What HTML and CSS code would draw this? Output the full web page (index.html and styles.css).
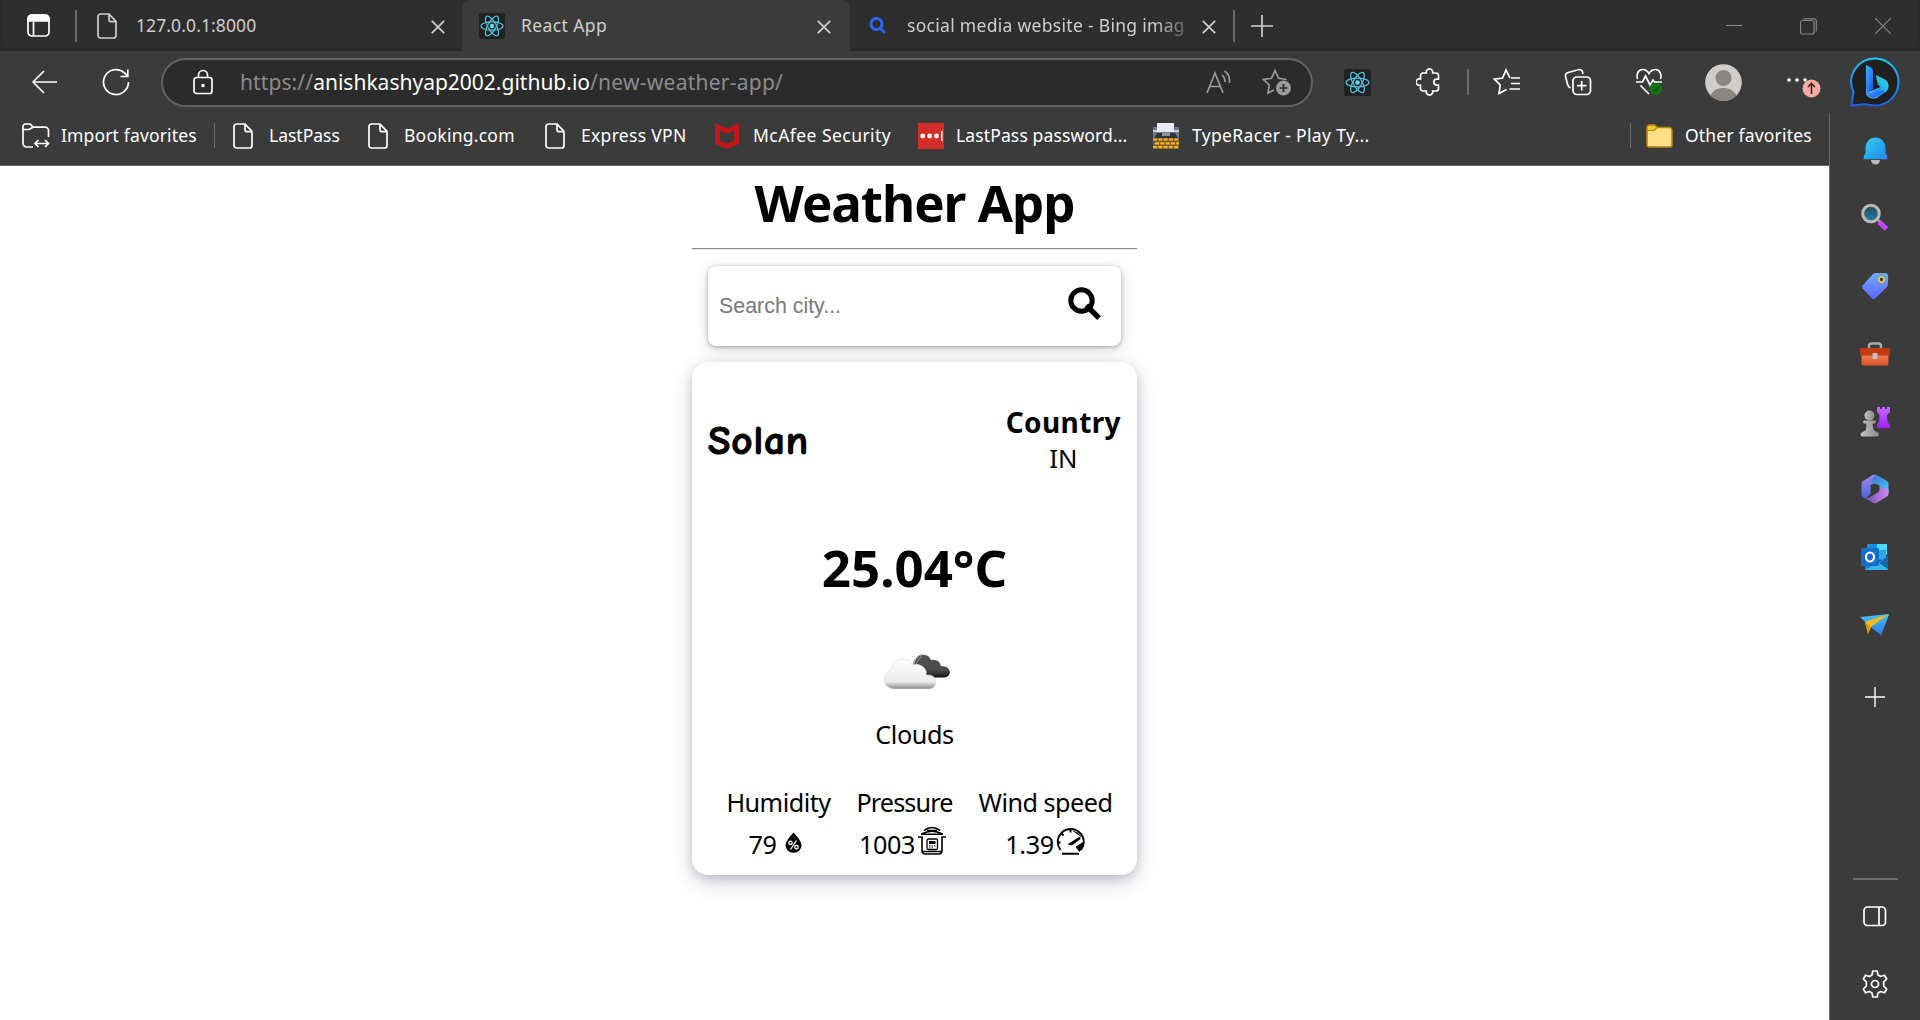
FILE: index.html
```html
<!DOCTYPE html>
<html lang="en">
<head>
<meta charset="utf-8">
<title>React App</title>
<link rel="stylesheet" href="styles.css">
</head>
<body>
<svg class="defs" width="0" height="0">
  <defs>
    <linearGradient id="gBing" x1="0" y1="0" x2="0" y2="1"><stop offset="0" stop-color="#18c8f4"/><stop offset="1" stop-color="#1f5ff0"/></linearGradient>
    <linearGradient id="gB" x1="0" y1="0" x2="1" y2="1"><stop offset="0" stop-color="#39b6ff"/><stop offset="1" stop-color="#1c4fe8"/></linearGradient>
    <linearGradient id="gB2" x1="1" y1="0" x2="0" y2="1"><stop offset="0" stop-color="#35e0d0"/><stop offset=".5" stop-color="#22a8f0"/><stop offset="1" stop-color="#a8e4ff"/></linearGradient>
    <linearGradient id="gBell" x1="0" y1="0" x2="1" y2="1"><stop offset="0" stop-color="#3ccbf4"/><stop offset=".7" stop-color="#1e9fee"/><stop offset="1" stop-color="#3f7dfb"/></linearGradient>
    <linearGradient id="gLens" x1="0" y1="0" x2="0" y2="1"><stop offset="0" stop-color="#234a5c"/><stop offset="1" stop-color="#2281a8"/></linearGradient>
    <linearGradient id="gTag" x1="0" y1="0" x2="0" y2="1"><stop offset="0" stop-color="#6cabf8"/><stop offset="1" stop-color="#6264ff"/></linearGradient>
    <linearGradient id="gBox" x1="0" y1="0" x2="0" y2="1"><stop offset="0" stop-color="#f5805a"/><stop offset="1" stop-color="#de4f28"/></linearGradient>
    <linearGradient id="gPawn" x1="0" y1="0" x2="1" y2="0"><stop offset="0" stop-color="#c4c4c4"/><stop offset="1" stop-color="#8a8a8a"/></linearGradient>
    <linearGradient id="gRook" x1="0" y1="0" x2="0" y2="1"><stop offset="0" stop-color="#c868ff"/><stop offset="1" stop-color="#a020ff"/></linearGradient>
    <linearGradient id="gM1" x1="0" y1="0" x2="1" y2="1"><stop offset="0" stop-color="#3a6fd0"/><stop offset="1" stop-color="#4cc8f8"/></linearGradient>
    <linearGradient id="gM2" x1="0" y1="0" x2="0" y2="1"><stop offset="0" stop-color="#a884ea"/><stop offset="1" stop-color="#4668d8"/></linearGradient>
    <linearGradient id="gM3" x1="0" y1="0" x2="1" y2="0"><stop offset="0" stop-color="#6a4cb0"/><stop offset="1" stop-color="#d08aec"/></linearGradient>
    <linearGradient id="gPlane" x1="0" y1="0" x2="0" y2="1"><stop offset="0" stop-color="#4cc2f4"/><stop offset="1" stop-color="#2b78ee"/></linearGradient>
    <linearGradient id="gCloud" x1="0" y1="0" x2="0" y2="1"><stop offset="0" stop-color="#ffffff"/><stop offset=".75" stop-color="#ececec"/><stop offset="1" stop-color="#8a8a8a"/></linearGradient>
    <linearGradient id="gDark" x1="0" y1="0" x2="0" y2="1"><stop offset="0" stop-color="#555"/><stop offset=".7" stop-color="#484848"/><stop offset="1" stop-color="#111"/></linearGradient>
    <symbol id="page" viewBox="0 0 20 26"><path d="M3.500 1H12L19 8.300V22.500a2.500 2.500 0 0 1-2.500 2.500h-13A2.500 2.500 0 0 1 1 22.500v-19A2.500 2.500 0 0 1 3.500 1ZM12 1v6.200A1.400 1.400 0 0 0 13.400 8.600H19"/></symbol>
    <symbol id="cross" viewBox="0 0 14 14"><path d="M.8.8l12.400 12.400M13.200.8L.8 13.200"/></symbol>
    <symbol id="react" viewBox="0 0 26 26"><rect width="26" height="26" rx="2.500" fill="#212121"/><g fill="none" stroke="#53c1de" stroke-width="1.200"><ellipse cx="13" cy="13" rx="11" ry="4.200"/><ellipse cx="13" cy="13" rx="11" ry="4.200" transform="rotate(60 13 13)"/><ellipse cx="13" cy="13" rx="11" ry="4.200" transform="rotate(120 13 13)"/></g><circle cx="13" cy="13" r="2.200" fill="#61dafb"/></symbol>
  </defs>
</svg>
<div class="browser">
  <header class="tabs">
    <svg class="ic workspace" width="23" height="23" viewBox="0 0 23 23"><rect x="1" y="1" width="21" height="21" rx="4"/><path d="M1 7V5a4 4 0 0 1 4-4h13a4 4 0 0 1 4 4v2Z" fill="#fff"/><path d="M6.500 7v15"/></svg>
    <i class="bar tabbar"></i>
    <div class="tab first">
      <svg class="ic dim" width="20" height="26"><use href="#page"/></svg>
      <span class="label t1">127.0.0.1:8000</span>
      <svg class="ic dim x" width="14" height="14"><use href="#cross"/></svg>
    </div>
    <div class="tab active">
      <svg width="26" height="26"><use href="#react"/></svg>
      <span class="label t2">React App</span>
      <svg class="ic dim x" width="14" height="14"><use href="#cross"/></svg>
    </div>
    <div class="tab third">
      <svg class="find" width="18" height="18" viewBox="0 0 18 18"><circle cx="7.500" cy="7" r="5.500"/><path d="M11.500 11.500l4.500 4.500"/></svg>
      <span class="label t3">social media website - Bing imag</span>
      <svg class="ic dim x" width="14" height="14"><use href="#cross"/></svg>
    </div>
    <i class="bar tabbar"></i>
    <svg class="ic dim newtab" width="24" height="24" viewBox="0 0 24 24"><path d="M12 1v22M1 12h22"/></svg>
    <div class="wincontrols">
      <svg width="16" height="16" viewBox="0 0 16 16"><path d="M0 7.500h16"/></svg>
      <svg width="17" height="17" viewBox="0 0 17 17"><rect x=".5" y="2.500" width="13.500" height="13.500" rx="2"/><path d="M3.500.8H14a2.300 2.300 0 0 1 2.300 2.300v10.500"/></svg>
      <svg width="16" height="16" viewBox="0 0 16 16"><path d="M0 0l16 16M16 0L0 16"/></svg>
    </div>
  </header>

  <nav class="toolbar">
    <svg class="ic back" width="26" height="24" viewBox="0 0 26 24"><path d="M13 1L2 12l11 11M2 12h24"/></svg>
    <svg class="ic reload" width="28" height="28" viewBox="0 0 28 28"><path d="M26.500 14A12.500 12.500 0 1 1 22.500 4.900L25.500 8M25.800 1.500V8.500H18.500"/></svg>
    <div class="address">
      <svg class="ic" width="20" height="26" viewBox="0 0 20 26"><rect x="1" y="8.500" width="18" height="16" rx="2.500"/><path d="M5.500 8.500V6a4.500 4.500 0 0 1 9 0v2.500"/><circle cx="10" cy="16.500" r="1" fill="#fff"/></svg>
      <div class="url"><span class="u1">https://</span><span class="u2">anishkashyap2002.github.io</span><span class="u3">/new-weather-app/</span></div>
      <svg class="ic grey read" width="26" height="24" viewBox="0 0 26 24"><path d="M1 23L9 3l8 20M4 16.500h10M16 5c2 1.500 3 4 3 7M18.500 1c4 2.500 5.500 7 5 12"/></svg>
      <svg class="ic grey" width="30" height="28" viewBox="0 0 30 28"><path d="M12 22L6 25l1.200-8L1.500 11.500l8-1.200L13 2.500l3.600 7.800 8 1.200"/><circle cx="21.500" cy="20" r="7.500" fill="#9a9a9a" stroke="none"/><path d="M21.500 16v8M17.500 20h8" stroke="#2b2b2b"/></svg>
    </div>
    <svg class="t-react" width="27" height="27" viewBox="0 0 26 26"><use href="#react"/></svg>
    <svg class="ic t-puzzle" width="25" height="28" viewBox="0 0 25 28"><path d="M6 5h4.300a3.300 3.300 0 1 1 6.400 0H20a2.500 2.500 0 0 1 2.500 2.500v3.600h-1.700a3 3 0 0 0 0 6h1.700v3.400A2.500 2.500 0 0 1 20 23h-3.300a3.300 3.300 0 1 1-6.400 0H7a2.500 2.500 0 0 1-2.500-2.500v-3.300a3.300 3.300 0 1 1 0-6.200V7.500A2.500 2.500 0 0 1 7 5Z"/></svg>
    <i class="bar t-bar"></i>
    <svg class="ic t-fav" width="28" height="28" viewBox="0 0 28 28"><path d="M17 10L13 2 9.600 10 1.500 11.200 7.200 17 6 25.500 13.500 21.500M18 10h9M18 15.500h9M16.500 21h10.500"/></svg>
    <svg class="ic t-coll" width="28" height="28" viewBox="0 0 28 28"><rect x="9" y="9" width="17.500" height="17.500" rx="4"/><path d="M17.700 13v9.500M13 17.700h9.500M6.500 20C4.500 19 3.800 17.500 3.300 15.500L1.600 8.500C1.200 6.500 2.200 5 4.200 4.500L14.500 1.700c2-.5 3.500.3 4 2.300L19 6"/></svg>
    <svg class="ic t-heart" width="30" height="30" viewBox="0 0 30 30"><path d="M2.500 12C1 8 3 2.500 7.500 2.500c3 0 5 1.500 6.500 4 1.500-2.500 3.500-4 6.500-4C25 2.500 27 8 25.500 12M1 15h6.500l3-6 4.500 9 3-5 1.500 2H27M5.500 18.500L14 27"/><circle cx="21" cy="22" r="6" fill="#0f7a12" stroke="none"/><path d="M18.500 22l2 2 3.500-4" stroke-width="1.200" stroke="#1d3d1d"/></svg>
    <svg class="t-user" width="37" height="37" viewBox="0 0 37 37"><circle cx="18.500" cy="18.500" r="18.300" fill="#d0cecb"/><circle cx="18.500" cy="14" r="8" fill="#8a8682"/><path d="M5.500 31.500c2.500-5 7-7.500 13-7.500s10.500 2.500 13 7.500A18 18 0 0 1 18.500 37 18 18 0 0 1 5.500 31.500Z" fill="#8a8682"/></svg>
    <svg class="t-more" width="36" height="30" viewBox="0 0 36 30"><g fill="#fff"><circle cx="3" cy="10" r="1.800"/><circle cx="11" cy="10" r="1.800"/><circle cx="19" cy="10" r="1.800"/></g><circle cx="25.500" cy="18.500" r="9" fill="#f6aaa5"/><path d="M25.500 24V14M22 17l3.500-3.500L29 17" fill="none" stroke="#3b2525" stroke-width="1.600"/></svg>
    <svg class="t-bing" width="50" height="50" viewBox="0 0 50 50"><path d="M25 1.500a23.500 23.500 0 1 1 0 47c-5 0-8-1.500-11-1.200L2 48.500c-.8 0-.6-1-.3-2L3.500 35A23.500 23.500 0 0 1 25 1.500Z" fill="#202020" stroke="url(#gBing)" stroke-width="2"/><path d="M16 8l5 2.500q2 1 2 3V32l-7 5q1-2 0-4Z" fill="url(#gB)"/><path d="M26 18l9 4.500q4 2.500 3.500 7.500Q38 34 34 36L26.500 41q-6 2-10-3-.5-3 2-3l12-5-2.500-2.500Q26 22 26 18Z" fill="url(#gB2)"/><path d="M16 31v4q1 5.500 6.500 6 2.500 0 5-1.500L35 35l-6-4-8 4.500q-3.500 1-5-4.500Z" fill="url(#gB)"/></svg>
  </nav>

  <div class="lower">
    <div class="content">
      <div class="favorites">
        <svg class="ic f-import" width="28" height="27" viewBox="0 0 28 27"><path d="M11 25H4.500A3.500 3.500 0 0 1 1 21.500V4.500A2.500 2.500 0 0 1 3.500 2H8l3.500 3.200H23a3.500 3.500 0 0 1 3.500 3.500V15M1 7.500h6L11.500 5M16.500 18L13 21.500l3.500 3.500M23 18l3.500 3.500L23 25M13 21.500h13.500"/></svg>
        <span class="fl a">Import favorites</span>
        <i class="bar f-bar"></i>
        <svg class="ic f-page" width="20" height="26"><use href="#page"/></svg><span class="fl b">LastPass</span>
        <svg class="ic f-page" width="20" height="26"><use href="#page"/></svg><span class="fl c">Booking.com</span>
        <svg class="ic f-page" width="20" height="26"><use href="#page"/></svg><span class="fl d">Express VPN</span>
        <svg class="f-mc" width="24" height="26" viewBox="0 0 24 26"><path d="M0 0l12 5.500L24 0v21L12 26 0 21ZM5 7.500v10.200l7 3 7-3V7.500l-7 3.300Z" fill="#c01818" fill-rule="evenodd"/></svg><span class="fl e">McAfee Security</span>
        <svg class="f-lp" width="26" height="26" viewBox="0 0 26 26"><path fill="#d32d27" d="M0 0h26v26H0z"/><g fill="#fff"><circle cx="4.700" cy="13" r="2.400"/><circle cx="11.700" cy="13" r="2.400"/><circle cx="18.500" cy="13" r="2.400"/><path d="M23 8h1.500v10H23z"/></g></svg><span class="fl f">LastPass password...</span>
        <svg class="f-tr" width="26" height="26" viewBox="0 0 26 26"><path fill="#73788e" d="M0 4h26v11H0z"/><path fill="#c6c8d6" d="M0 7h26v2H0z"/><path fill="#e9ebf3" d="M4 0h17v9H4z"/><path fill="#30343e" d="M4 10h18l3 5H1z"/><path fill="#8e929c" d="M9 10h8v3H9z"/><path fill="#7d5c28" d="M0 15h26v11H0z"/><path stroke="#f3b32b" stroke-width="2.200" stroke-dasharray="4 1.300" d="M0 16.500h26M2 20.300h24M0 24.200h26"/></svg><span class="fl g">TypeRacer - Play Ty...</span>
        <i class="bar f-bar2"></i>
        <svg class="f-folder" width="27" height="24" viewBox="0 0 27 24"><path d="M1 20.500V4a3 3 0 0 1 3-3h4.500l3 2.500H23a3 3 0 0 1 3 3v14.500a2 2 0 0 1-2 2H3a2 2 0 0 1-2-2.500Z" fill="#ffde85" stroke="#b8870c" stroke-width="1.600"/><path d="M1.200 6.500V4A2.500 2.500 0 0 1 4 1.200h4.500l2.700 2.300L8 6.500Z" fill="#f5c52b" stroke="#b8870c" stroke-width="1.200"/></svg><span class="fl h">Other favorites</span>
      </div>

      <main class="page">
        <h1 class="title">Weather App</h1>
        <hr class="rule">
        <div class="search"><span class="placeholder">Search city...</span>
          <svg width="33" height="33" viewBox="0 0 33 33"><circle cx="13.500" cy="13.500" r="10.700" fill="none" stroke="#000" stroke-width="5"/><path d="M21 21l9 9" stroke="#000" stroke-width="5.400" stroke-linecap="square" transform="translate(-.8 -.8)"/></svg>
        </div>
        <section class="card">
          <div class="place"><h2 class="city">Solan</h2>
            <div class="country"><strong class="ctitle">Country</strong><span class="code">IN</span></div></div>
          <div class="temp">25.04°C</div>
          <svg class="cloud" width="68" height="38" viewBox="0 0 68 38"><path d="M31 12C32 5 37 1 42 2q4 .5 6 5 8-1.500 10 6 8 0 9 6-.5 5-6 5.500H42Z" fill="url(#gDark)"/><path d="M30 12c1-6 5-9.500 9-10.500M33 12c1-4 3-7 6-8.500" fill="none" stroke="#999" stroke-width="1"/><path d="M10 36Q1 34 1 26.500 1 20 8 17 9 7 19 6q7 0 10 6 9-2 13 4 2 3 1 6 9-1 10 7-.5 6-6 7Z" fill="url(#gCloud)" stroke="#dedede" stroke-width=".7"/></svg>
          <div class="cond">Clouds</div>
          <div class="stats">
            <div class="stat s1"><span class="name">Humidity</span><span class="value"><span class="n1">79</span>
              <svg class="drop" width="17" height="21" viewBox="0 0 17 21"><path d="M8.500.5Q16.500 9 16.500 13.500a8 7.300 0 0 1-16 0Q.5 9 8.500.5Z"/><g fill="none" stroke="#fff" stroke-width="1.300"><circle cx="5.500" cy="10.800" r="1.700"/><circle cx="11.500" cy="15.200" r="1.700"/><path d="M11.500 8.500l-6 9"/></g></svg></span></div>
            <div class="stat s2"><span class="name">Pressure</span><span class="value"><span class="n2">1003</span>
              <svg class="cooker" width="30" height="29" viewBox="0 0 30 29"><g fill="none" stroke="#000" stroke-width="1.600"><path d="M7 4.500Q15-1.500 23 4.500M10 4.500h10M4.500 8Q15 2.500 25.500 8M4 8.300h22M1 11h4v13.500q0 3.500 3.500 3.500h13q3.500 0 3.500-3.500V11h4M5 25.500h20"/><rect x="10" y="13" width="10.500" height="10.500" rx="1.500" stroke-width="1.300"/></g><path d="M12 15h6.500v3H12zM12 19.500h1.500v1H12zM14.500 19.500H16v1h-1.500zM17 19.500h1.500v1H17zM12 21.500h1.500v.8H12zM14.500 21.500H16v.8h-1.500z"/></svg></span></div>
            <div class="stat s3"><span class="name">Wind speed</span><span class="value"><span class="n3">1.39</span>
              <svg class="gauge" width="29" height="27" viewBox="0 0 29 27"><path d="M4.500 22A13 13 0 1 1 25 22M1.500 14.500h3M14.500 1.500v3M5.500 5.500l2 2M6 25.700h17" fill="none" stroke="#000" stroke-width="1.900"/><path d="M12 16L23 9q2 0 1.500 2L16.500 17q-4 1-4.500-1Z"/><path d="M27.500 14l-7.500 5 3.500 4.500q4-4 4-9.500ZM17 3q6 1.500 8 6" stroke="#000" fill="#000" stroke-width=".7"/></svg></span></div>
          </div>
        </section>
      </main>
    </div>

    <aside class="side">
      <div class="slot"><svg width="25" height="28" viewBox="0 0 25 28"><path d="M8 23a4.500 4.500 0 0 0 9 0Z" fill="#b8b8b8"/><path d="M12.500.5Q22 1 22.500 11v5q2 2 1.800 6.300H.7Q.5 18 2.500 16v-5Q3 1 12.500.5Z" fill="url(#gBell)"/></svg></div>
      <div class="slot lens"><svg width="28" height="28" viewBox="0 0 28 28"><path d="M18 19l7.500 6.800" stroke="#c543ff" stroke-width="5"/><path d="M15 15l4 4" stroke="#999" stroke-width="2.500"/><circle cx="10" cy="10.500" r="8.300" fill="url(#gLens)" stroke="#b9b9b9" stroke-width="3"/></svg></div>
      <div class="slot"><svg width="28" height="28" viewBox="0 0 28 28"><path d="M14 1h10q3 0 3.200 3l-.3 8.500q-.2 1.700-1.500 3L14 26.500q-1.500 1-3 0L1.500 16.500q-1-1.500 0-3L12 2q1-1 2-1Z" fill="url(#gTag)"/><circle cx="20.500" cy="7.500" r="2.500" fill="#243a70" stroke="#f8cd0c" stroke-width="1.700"/></svg></div>
      <div class="slot"><svg width="30" height="24" viewBox="0 0 30 24"><path d="M9 6V4q0-2.500 2.500-2.500h7Q21 1.500 21 4v2" fill="none" stroke="#aaa" stroke-width="2.400"/><path d="M1.500 12h27v9q0 2.500-2 2.500h-23q-2 0-2-2.500Z" fill="url(#gBox)"/><path d="M1.500 6h27q1.500 0 1.500 1.500V12q-1 1.500-3 1.500H3Q1 13.500 0 12V7.500Q0 6 1.500 6Z" fill="#c43a12"/><rect x="12.500" y="11" width="5" height="6" rx=".8" fill="#c0c0c0"/></svg></div>
      <div class="slot"><svg width="30" height="30" viewBox="0 0 30 30"><path d="M17 0h3v2h2V0h3v2h2V0h3v5l-3 3 .5 7 2.500 3v3H17v-3l2-3 .5-7L17 5Z" fill="url(#gRook)"/><circle cx="9.500" cy="8.500" r="5" fill="url(#gPawn)"/><path d="M4 13.500h11q2 1.500 0 3h-2.500L13.500 23l5 3q1 3-1 3.500H2q-2-.5-1-3.500l5-3 .5-6.500H4q-2-1.500 0-3Z" fill="url(#gPawn)"/></svg></div>
      <div class="slot"><svg width="28" height="30" viewBox="0 0 28 30"><path d="M9 2.500L12.500.8q1.500-.8 3 0L26 7q1.500 1 1.500 2.500V19L18.500 13.500V11.500L14 9.500 9 11Z" fill="url(#gM1)"/><path d="M12.500.8L14 2q-3 1.500-3 5l-1.500 4V20l-5 4.500L2 23Q.5 22 .5 20V9.500Q.5 8 2 7Z" fill="url(#gM2)"/><path d="M27.500 15v5q0 1.500-1.500 2.500L15.500 29q-1.500.7-3 0L3 23.500q4 1 7-1l7-4.200q1.500-1 1.500-3.300v-2Z" fill="url(#gM3)"/></svg></div>
      <div class="slot"><svg width="28" height="28" viewBox="0 0 28 28"><path fill="#1490df" d="M6 1h19v16H6z"/><path fill="#50d9ff" d="M16 1h10v11H16z"/><path fill="#28a8ea" d="M7 12h9v8H7zM16 7h9v9h-9z"/><path fill="#1784d8" d="M4 15l23 12H4z"/><path fill="#35b8f1" d="M27 13v14H4l14-8Z"/><path fill="#1268b0" d="M27 13v13l-9-6Z"/><rect y="5" width="18" height="18" rx="1.500" fill="#0f6fc9"/><ellipse cx="9" cy="14" rx="4" ry="4.500" fill="none" stroke="#fff" stroke-width="2.200"/></svg></div>
      <div class="slot"><svg width="30" height="22" viewBox="0 0 30 22"><path d="M0 3L29 0 21 21 12 14Z" fill="url(#gPlane)"/><path d="M29 0L5 8l3 12 3-7Z" fill="#f7bd18"/><path d="M5 8l3 12 2-8Z" fill="#e0900a"/><path d="M29 0L11 13l10 8Z" fill="url(#gPlane)"/></svg></div>
      <div class="slot plus"><svg class="ic" width="20" height="20" viewBox="0 0 20 20"><path d="M10 0v20M0 10h20" stroke-width="1.400"/></svg></div>
      <i class="sep"></i>
      <div class="slot"><svg class="ic" width="24" height="21" viewBox="0 0 24 21"><rect x="1" y="1" width="21.500" height="18.500" rx="3.500"/><path d="M16 1v18.500"/></svg></div>
      <div class="slot"><svg class="ic" width="28" height="28" viewBox="0 0 28 28"><path d="M11.800 1h4.400l.8 4 2.600 1.500L23.500 5.200l2.200 3.800-3 2.800v4.400l3 2.800-2.200 3.800-3.900-1.300L17 23l-.8 4h-4.400L11 23l-2.600-1.500-3.900 1.300L2.300 19l3-2.800v-4.400l-3-2.800 2.200-3.800 3.900 1.300L11 5Z" stroke-linejoin="round"/><circle cx="14" cy="14" r="3.500"/></svg></div>
    </aside>
  </div>
</div>
</body>
</html>
```

FILE: styles.css
```css
* { box-sizing: border-box; }
body { margin: 0; width: 1920px; height: 1020px; overflow: hidden; background: #fff; font-family: "Segoe UI", "Noto Sans", sans-serif; }
svg { display: block; flex: none; }
.defs { position: absolute; }
.browser { display: flex; flex-direction: column; height: 1020px; background: #3b3b3b; }
.ic { fill: none; stroke: #fff; stroke-width: 1.7; }
.dim { stroke: #d0d0d0; }
.grey { stroke: #9a9a9a; }
.bar { display: block; width: 1px; background: #6a6a6a; flex: none; }

.tabs { display: flex; align-items: center; height: 51px; background: #2e2e2e; box-shadow: inset 0 -2px 2px #272727; flex: none; }
.workspace { margin-left: 27px; }
.tabbar { height: 32px; width: 2px; margin-left: 25px; }
.tab { display: flex; align-items: center; height: 51px; }
.label { padding-bottom: 2px; font-size: 17.5px; line-height: 26px; color: #cfcfcf; white-space: nowrap; }
.x { margin: 2px 0 0 auto; }
.first { width: 385px; padding: 0 17px 0 20px; }
.first .label { margin-left: 19px; letter-spacing: .1px; }
.active { width: 388px; background: #3b3b3b; border-radius: 8px 8px 0 0; padding: 0 19px 0 17px; }
.active .label { margin-left: 16px; letter-spacing: .4px; }
.third { width: 383px; padding: 0 17px 0 19px; }
.find { fill: none; stroke: #2a66f6; stroke-width: 3; }
.third .label { margin-left: 20px; width: 281px; letter-spacing: .3px; -webkit-mask-image: linear-gradient(90deg, #000 88%, rgba(0,0,0,.25) 100%); mask-image: linear-gradient(90deg, #000 88%, rgba(0,0,0,.25) 100%); }
.third + .tabbar { margin-left: 0; }
.newtab { margin-left: 15px; }
.wincontrols { display: flex; align-items: center; gap: 58px; margin: 1px 29px 0 auto; }
.wincontrols svg { fill: none; stroke: #858585; stroke-width: 1.2; }

.toolbar { display: flex; align-items: center; height: 62px; flex: none; }
.back { margin-left: 31px; }
.reload { margin-left: 45px; }
.address { display: flex; align-items: center; width: 1152px; height: 49px; margin-left: 31px; padding: 0 19px 0 30px; border: 2px solid #636363; border-radius: 25px; background: #2b2b2b; }
.url { margin-left: 27px; font-size: 21px; line-height: 28px; color: #8b8b8b; white-space: nowrap; }
.u1 { letter-spacing: .1px; }
.u2 { color: #fff; }
.u3 { letter-spacing: .25px; }
.read { margin: 0 30px 0 auto; }
.t-react { margin-left: 31px; }
.t-puzzle { margin-left: 45px; }
.t-bar { height: 26px; width: 2px; margin-left: 26px; }
.t-fav { margin-left: 24px; }
.t-coll { margin-left: 43px; }
.t-heart { margin-left: 43px; }
.t-user { margin-left: 40px; }
.t-more { margin-left: 44px; margin-top: 5px; }
.t-bing { margin-left: 28px; }

.lower { display: flex; flex: 1; min-height: 0; }
.content { display: flex; flex-direction: column; width: 1829px; }
.favorites { display: flex; align-items: center; height: 53px; padding-bottom: 7px; border-bottom: 1px solid #686868; flex: none; }
.fl { padding-bottom: 2px; font-size: 17.5px; line-height: 26px; color: #fff; white-space: nowrap; flex: none; }
.f-import { margin: 0 11px 0 22px; }
.a { width: 153px; letter-spacing: .15px; }
.f-bar { height: 25px; margin-right: 18px; }
.f-page { margin-right: 16px; }
.b { width: 99px; }
.c { width: 141px; letter-spacing: .25px; }
.d { width: 134px; letter-spacing: .3px; }
.f-mc { margin-right: 14px; }
.e { width: 165px; letter-spacing: .45px; }
.f-lp { margin-right: 12px; }
.f { width: 197px; letter-spacing: .13px; }
.f-tr { margin-right: 13px; }
.g { letter-spacing: .35px; }
.f-bar2 { height: 25px; margin-left: auto; margin-right: 15px; }
.f-folder { margin-right: 12px; }
.h { width: 144px; letter-spacing: .18px; }

.page { display: flex; flex-direction: column; align-items: center; flex: 1; background: #fff; color: #000; }
.title { margin: 0; height: 82px; font-size: 51px; line-height: 73px; font-weight: 700; letter-spacing: -1px; }
.rule { width: 445px; height: 2px; margin: 0; border: 0; border-top: 1px solid #8a8a8a; border-bottom: 1px solid #e6e6e6; }
.search { display: flex; align-items: center; justify-content: space-between; width: 413px; height: 80px; margin-top: 16px; padding: 0 20px 0 11px; border-radius: 8px; box-shadow: 0 1px 4px rgba(0,0,0,.3), 0 4px 16px rgba(0,0,0,.14); }
.placeholder { font: 21.4px "Liberation Sans", Arial, sans-serif; color: #7a7a7a; }
.search svg { margin-top: -6px; }
.card { display: flex; flex-direction: column; align-items: center; width: 445px; height: 513px; margin-top: 16px; border-radius: 16px; background: #fff; box-shadow: 0 7px 20px -2px rgba(50,50,93,.32), 0 2px 10px rgba(0,0,0,.1); }
.place { display: flex; justify-content: space-between; width: 413px; padding-top: 41px; height: 166px; }
.city { margin: 14px 0 0; font: 700 41px/48px "Comic Sans MS", "Comic Neue", "Lato", sans-serif; letter-spacing: .9px; -webkit-text-stroke: 1.1px #000; }
.country { display: flex; flex-direction: column; align-items: center; }
.ctitle { font-size: 28px; line-height: 38px; letter-spacing: .4px; }
.code { font-size: 25.6px; line-height: 36px; }
.temp { font-size: 51px; line-height: 84px; font-weight: 700; margin-top: -3px; }
.cloud { margin-top: 44px; margin-left: 4px; }
.cond { margin-top: 25px; font-size: 25.2px; line-height: 36px; letter-spacing: -.4px; }
.stats { display: flex; width: 445px; margin-top: 32px; padding-left: 35px; }
.stat { display: flex; flex-direction: column; align-items: center; font-size: 25.2px; white-space: nowrap; }
.name { line-height: 36px; letter-spacing: -.5px; }
.s2 .name { letter-spacing: -.9px; }
.value { display: flex; align-items: center; line-height: 36px; height: 48px; letter-spacing: -.4px; }
.s1 { width: 103px; }
.s1 .value { margin-right: 7px; }
.s2 { width: 95px; margin-left: 27px; }
.s2 .value { margin-right: 3px; }
.s3 { width: 135px; margin-left: 26px; }
.s3 .value { margin-right: 1px; }
.drop { margin: -4px 0 0 8px; }
.cooker { margin: -7px 0 0 2px; }
.gauge { margin: -6px 0 0 2px; }

.side { display: flex; flex-direction: column; align-items: center; width: 91px; border-left: 1px solid #696969; padding-top: 4px; }
.slot { display: flex; align-items: center; justify-content: center; width: 90px; height: 67.7px; flex: none; }
.lens { padding-bottom: 4px; }
.plus { margin-top: 5px; }
.sep { width: 45px; height: 2px; margin: auto 0 3px; background: #6e6e6e; }
.sep + .slot + .slot { margin-bottom: 2px; }
```
